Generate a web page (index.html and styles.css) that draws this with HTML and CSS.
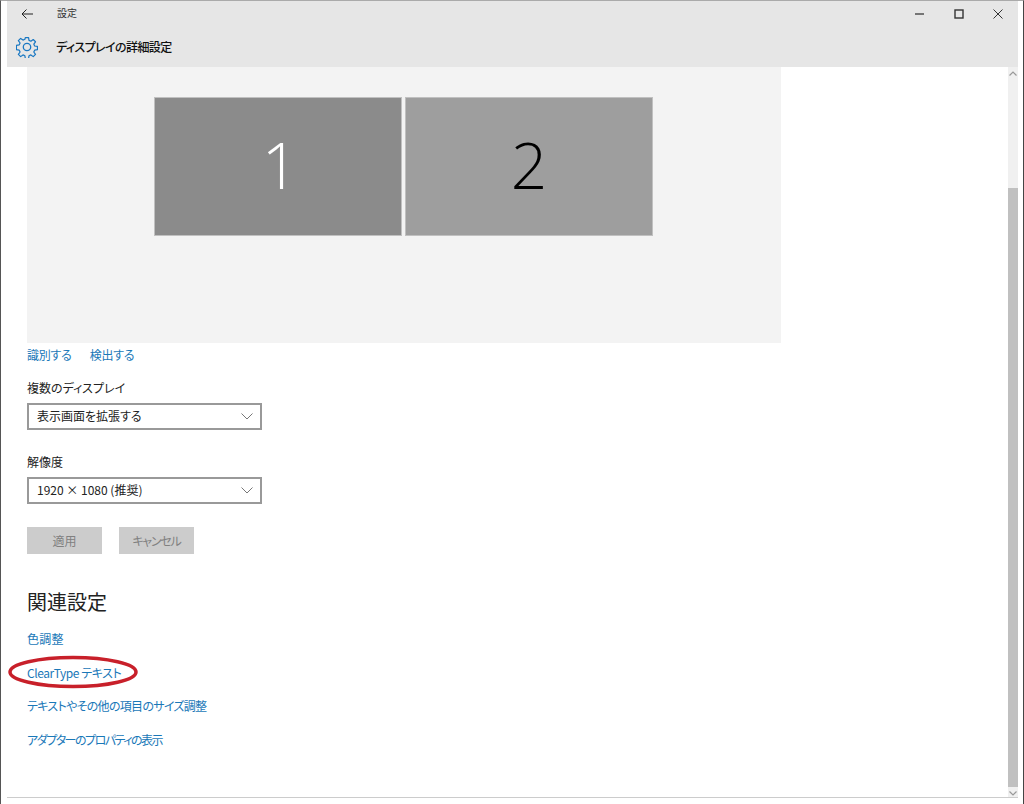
FILE: index.html
```html
<!DOCTYPE html>
<html lang="ja">
<head>
<meta charset="utf-8">
<title>設定</title>
<link rel="stylesheet" href="styles.css">
</head>
<body>
<div class="window">
  <header class="titlebar">
    <div class="toprow">
      <svg class="back" width="12" height="10" viewBox="0 0 12 10"><path d="M5.5 .5 1 5l4.5 4.5M1 5h11" fill="none" stroke="#222" stroke-width="1"/></svg>
      <span class="apptitle">設定</span>
      <div class="controls">
        <svg class="ctl" width="10" height="10" viewBox="0 0 10 10"><path d="M0 5h9" stroke="#444" stroke-width="1.4"/></svg>
        <svg class="ctl" width="10" height="10" viewBox="0 0 10 10"><rect x="1" y="1" width="8" height="8" fill="none" stroke="#333" stroke-width="1.4"/></svg>
        <svg class="ctl" width="10" height="10" viewBox="0 0 10 10"><path d="M.5.5l9 9M9.500.5l-9 9" stroke="#333" stroke-width="1"/></svg>
      </div>
    </div>
    <div class="pagerow">
      <svg class="gear" width="22" height="22" viewBox="0 0 22 22"><path d="M9.3 1h3.4l.5 3 2 .9 2.500-1.800 2.400 2.400-1.800 2.500.9 2 3 .5v3.400l-3 .5-.9 2 1.800 2.500-2.400 2.400-2.500-1.800-2 .9-.5 3H9.300l-.5-3-2-.9-2.500 1.800-2.400-2.400 1.800-2.500-.9-2-3-.5V9.300l3-.5.9-2-1.800-2.500 2.400-2.400 2.500 1.800 2-.9z" transform="translate(.6 .6) scale(.94)" fill="none" stroke="#1a78c2" stroke-width="1.300" stroke-linejoin="round"/><circle cx="11" cy="11" r="3.700" fill="none" stroke="#1a78c2" stroke-width="1.300"/></svg>
      <h1 class="pagetitle">ディスプレイの詳細設定</h1>
    </div>
  </header>
  <div class="body">
    <main class="content">
      <section class="canvas">
        <div class="monitor monitor-one">1</div>
        <div class="monitor monitor-two">2</div>
      </section>
      <nav class="actions"><a>識別する</a><a>検出する</a></nav>
      <label class="field-label first">複数のディスプレイ</label>
      <div class="select"><span>表示画面を拡張する</span><svg width="12" height="7" viewBox="0 0 12 7"><path d="M.5.5 6 6l5.500-5.500" fill="none" stroke="#777" stroke-width="1"/></svg></div>
      <label class="field-label second">解像度</label>
      <div class="select"><span>1920 × 1080 (推奨)</span><svg width="12" height="7" viewBox="0 0 12 7"><path d="M.5.5 6 6l5.500-5.500" fill="none" stroke="#777" stroke-width="1"/></svg></div>
      <div class="buttons"><button class="btn">適用</button><button class="btn btn-kana">キャンセル</button></div>
      <h2 class="related">関連設定</h2>
      <ul class="links">
        <li class="link-color">色調整</li>
        <li class="link-cleartype">ClearType テキスト</li>
        <li class="link-size">テキストやその他の項目のサイズ調整</li>
        <li class="link-adapter">アダプターのプロパティの表示</li>
      </ul>
    </main>
    <aside class="scrollbar">
      <svg class="arrow" width="8" height="5" viewBox="0 0 8 5"><path d="M.5 4.500 4 1l3.500 3.500" fill="none" stroke="#999" stroke-width="1.200"/></svg>
      <div class="thumb"></div>
      <svg class="arrow" width="8" height="5" viewBox="0 0 8 5"><path d="M.5.5 4 4 7.500.5" fill="none" stroke="#999" stroke-width="1.200"/></svg>
    </aside>
  </div>
  <div class="bottomline"></div>
</div>
<svg class="ring" width="132" height="36" viewBox="0 0 132 36"><ellipse cx="66" cy="17" rx="63" ry="14.500" fill="none" stroke="#c8202a" stroke-width="3.500"/></svg>
</body>
</html>
```
FILE: styles.css
```css
* { box-sizing: border-box; }
html, body { margin: 0; padding: 0; }
body {
  width: 1024px; height: 804px; overflow: hidden; background: #fff; position: relative;
  font-family: "Noto Sans CJK JP", "Noto Sans", sans-serif; color: #1a1a1a;
  font-feature-settings: "palt";
}
.window {
  width: 1024px; height: 804px; display: flex; flex-direction: column;
  border-left: 1px solid #555; border-right: 1px solid #444; border-top: 1px solid #aaa;
  padding: 0 5px 0 6px;
}
.titlebar { height: 66px; background: #e6e6e6; flex: none; }
.toprow { height: 25px; display: flex; align-items: center; }
.back { margin-left: 14px; }
.apptitle { margin-left: 24px; padding-bottom: 2px; font-size: 10px; color: #333; }
.controls { margin-left: auto; display: flex; gap: 29px; padding-right: 15px; }
.pagerow { display: flex; align-items: center; height: 41px; padding-left: 9px; }
.pagetitle { margin: 0 0 0 18px; font-size: 12px; font-weight: 500; color: #111; letter-spacing: -.6px; }
.body { flex: 1; display: flex; min-height: 0; }
.content { flex: 1; padding-left: 20px; }
.canvas {
  width: 754px; height: 276px; background: #f3f3f3;
  display: flex; gap: 3px; padding: 30px 0 0 127px; align-items: flex-start;
}
.monitor {
  width: 248px; height: 139px; padding-bottom: 4px; display: flex; align-items: center; justify-content: center;
  border: 1px solid #c0c0c0;
  font-family: "Open Sans", "Lato", sans-serif; font-weight: 300; font-size: 64px; line-height: 1;
  font-feature-settings: normal;
}
.monitor-one { background: #8b8b8b; color: #fff; padding-left: 4px; }
.monitor-two { background: #9e9e9e; color: #000; }
.actions { display: flex; gap: 18px; margin-top: 4px; height: 16px; font-size: 12px; line-height: 16px; color: #1a78b8; letter-spacing: -.25px; }
.field-label { display: block; font-size: 12px; line-height: 16px; color: #222; }
.field-label.first { margin-top: 17px; }
.field-label.second { margin-top: 24px; }
.select {
  width: 235px; height: 27px; margin-top: 7px; border: 2px solid #999; background: #fff;
  display: flex; align-items: center; justify-content: space-between; padding: 0 7px 0 8px;
  font-size: 12px; color: #222;
}
.select span { line-height: 1; padding-bottom: 2px; }
.buttons { display: flex; gap: 17px; margin-top: 23px; }
.btn {
  width: 75px; height: 27px; padding: 0; border: 0; background: #ccc; color: #808080;
  font-family: inherit; font-size: 12px; font-feature-settings: "palt";
}
.btn-kana { letter-spacing: -1.2px; }
.related { margin: 35px 0 0; font-size: 20px; font-weight: 400; line-height: 26px; color: #222; font-feature-settings: normal; }
.links { list-style: none; margin: 16px 0 0; padding: 0; color: #1a78b8; font-size: 12px; }
.links li { height: 33.600px; line-height: 16px; }
.link-color { letter-spacing: .3px; }
.link-cleartype { letter-spacing: -.45px; }
.link-size { letter-spacing: -.7px; }
.link-adapter { letter-spacing: -1.5px; }
.scrollbar { width: 10px; background: #f0f0f0; display: flex; flex-direction: column; align-items: center; }
.arrow { flex: none; margin: 4px 0; }
.thumb { flex: none; width: 10px; height: 599px; margin-top: 108px; background: #c0c0c0; }
.bottomline { height: 7px; flex: none; border-top: 1px solid #ccc; }
.ring { position: absolute; left: 7px; top: 655px; }
```
